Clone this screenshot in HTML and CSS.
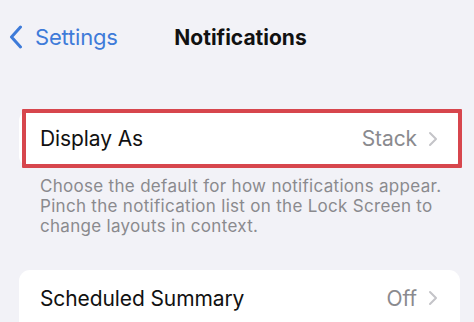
FILE: index.html
```html
<!DOCTYPE html>
<html>
<head>
<meta charset="utf-8">
<link rel="stylesheet" href="styles.css">
</head>
<body>
<div class="screen">
  <header class="nav">
    <div class="back">
      <svg class="back-chev" width="14" height="24" viewBox="0 0 14 24"><path d="M11.5 2 L2.5 12 L11.5 22" fill="none" stroke="#3e7bd9" stroke-width="3" stroke-linecap="round" stroke-linejoin="round"/></svg>
      <span class="back-label">Settings</span>
    </div>
    <h1 class="title">Notifications</h1>
    <div></div>
  </header>

  <section class="card card-first">
    <div class="row">
      <span class="row-label">Display As</span>
      <span class="row-value">Stack</span>
      <svg class="chev" width="10" height="16" viewBox="0 0 10 16"><path d="M2 2 L8 8 L2 14" fill="none" stroke="#c4c4c8" stroke-width="2" stroke-linecap="round" stroke-linejoin="round"/></svg>
    </div>
    <div class="highlight"></div>
  </section>

  <p class="footnote">Choose the default for how notifications appear.<br>Pinch the notification list on the Lock Screen to<br>change layouts in context.</p>

  <section class="card card-second">
    <div class="row">
      <span class="row-label">Scheduled Summary</span>
      <span class="row-value">Off</span>
      <svg class="chev" width="10" height="16" viewBox="0 0 10 16"><path d="M2 2 L8 8 L2 14" fill="none" stroke="#c4c4c8" stroke-width="2" stroke-linecap="round" stroke-linejoin="round"/></svg>
    </div>
  </section>
</div>
</body>
</html>
```

FILE: styles.css
```css
html, body {
  margin: 0;
  padding: 0;
  background: #f2f2f7;
}
body {
  font-family: Inter, "Noto Sans", "Liberation Sans", sans-serif;
  width: 474px;
  height: 322px;
  overflow: hidden;
}
.screen {
  display: flex;
  flex-direction: column;
}
.nav {
  height: 74px;
  display: grid;
  grid-template-columns: 1fr auto 1fr;
  align-items: center;
}
.back {
  display: flex;
  align-items: center;
  padding-left: 9px;
  gap: 12px;
  color: #3e7bd9;
}
.back-chev {
  display: block;
}
.back-label {
  font-size: 22px;
  letter-spacing: -0.2px;
}
.title {
  margin: 0;
  padding-left: 7px;
  font-size: 21px;
  font-weight: 700;
  color: #111;
  letter-spacing: 0;
}
.card {
  margin: 0 14px 0 19px;
  background: #fff;
  border-radius: 11px;
  position: relative;
}
.card-first {
  margin-top: 36px;
}
.row {
  height: 57px;
  display: flex;
  align-items: center;
  padding: 0 22px 0 21px;
}
.row-label {
  flex: 1;
  font-size: 21px;
  color: #111;
  letter-spacing: -0.1px;
}
.row-value {
  font-size: 21px;
  color: #8a8a8e;
  margin-right: 11px;
  letter-spacing: -0.1px;
}
.chev {
  display: block;
}
.highlight {
  position: absolute;
  left: 3px;
  right: -2px;
  top: -1px;
  bottom: -1px;
  border: 4px solid #d7464d;
  border-radius: 1px;
}
.footnote {
  margin: 9px 10px 0 40px;
  font-size: 17px;
  line-height: 20px;
  letter-spacing: 0.3px;
  color: #8a8a8e;
  white-space: nowrap;
}
.card-second {
  margin-top: 34px;
  border-radius: 11px 11px 0 0;
}
.card-second .row {
  height: 56px;
}
```
